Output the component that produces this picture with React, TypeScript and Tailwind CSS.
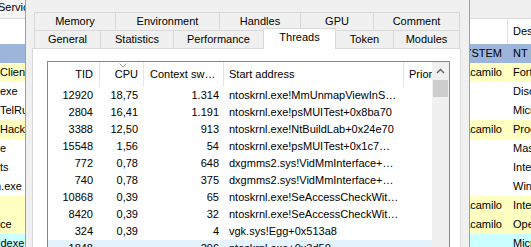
import React from "react";

type Thread = {
  tid: string;
  cpu: string;
  cs: string;
  addr: string;
};

const threads: Thread[] = [
  { tid: "12920", cpu: "18,75", cs: "1.314", addr: "ntoskrnl.exe!MmUnmapViewInS…" },
  { tid: "2804", cpu: "16,41", cs: "1.191", addr: "ntoskrnl.exe!psMUITest+0x8ba70" },
  { tid: "3388", cpu: "12,50", cs: "913", addr: "ntoskrnl.exe!NtBuildLab+0x24e70" },
  { tid: "15548", cpu: "1,56", cs: "54", addr: "ntoskrnl.exe!psMUITest+0x1c7…" },
  { tid: "772", cpu: "0,78", cs: "648", addr: "dxgmms2.sys!VidMmInterface+…" },
  { tid: "740", cpu: "0,78", cs: "375", addr: "dxgmms2.sys!VidMmInterface+…" },
  { tid: "10868", cpu: "0,39", cs: "65", addr: "ntoskrnl.exe!SeAccessCheckWit…" },
  { tid: "8420", cpu: "0,39", cs: "32", addr: "ntoskrnl.exe!SeAccessCheckWit…" },
  { tid: "324", cpu: "0,39", cs: "4", addr: "vgk.sys!Egg+0x513a8" },
  { tid: "1848", cpu: "", cs: "296", addr: "ntoskrnl.exe+0x3d50" },
  { tid: "9112", cpu: "", cs: "12", addr: "ntoskrnl.exe!KeWaitFor…" },
];

// rows of the main window list behind the dialog
const procRows = [
  { bg: "bg-[#9db5da]", left: "", user: "NT AUTHORITY\\SYSTEM", desc: "NT Kernel & System" },
  { bg: "bg-[#ffffc2]", left: "Client", user: "DESKTOP\\camilo", desc: "Fortnite Client" },
  { bg: "bg-white", left: "exe", user: "", desc: "Discord" },
  { bg: "bg-white", left: "TelRu", user: "", desc: "Microsoft Edge" },
  { bg: "bg-[#ffffc2]", left: "Hacker", user: "DESKTOP\\camilo", desc: "Process Hacker" },
  { bg: "bg-white", left: "e", user: "", desc: "Mass Storage" },
  { bg: "bg-white", left: "ts", user: "", desc: "Intel(R) Service" },
  { bg: "bg-white", left: "n.exe", user: "", desc: "Windows Host" },
  { bg: "bg-[#ffffc2]", left: "", user: "DESKTOP\\camilo", desc: "Intel Graphics" },
  { bg: "bg-[#ffffc2]", left: "ce", user: "DESKTOP\\camilo", desc: "Opera Browser" },
  { bg: "bg-[#ccffff]", left: "idexe", user: "", desc: "Microsoft Store" },
];

const topTabs = [
  { label: "Memory", w: "w-[81px]" },
  { label: "Environment", w: "w-[104px]" },
  { label: "Handles", w: "w-[81px]" },
  { label: "GPU", w: "w-[73px]" },
  { label: "Comment", w: "w-[87px] border-r" },
];

function MainListLeft() {
  return (
    <div className="w-[26px] shrink-0 overflow-hidden border-r border-[#a0a0a0]">
      <div className="h-[19px] overflow-hidden whitespace-nowrap border-b border-[#d9d9d9] bg-[#f5f5f5] leading-[14px]">
        <span className="-ml-[2px] inline-block">Services</span>
      </div>
      <div className="h-[25px]" />
      {procRows.map((r, i) => (
        <div
          key={i}
          className={`h-[19px] overflow-hidden whitespace-nowrap leading-[19px] ${r.bg}`}
        >
          <span className={r.left === "n.exe" ? "-ml-[5px] inline-block" : r.left === "idexe" ? "-ml-[2px] inline-block" : ""}>
            {r.left}
          </span>
        </div>
      ))}
    </div>
  );
}

function MainListRight() {
  return (
    <div className="min-w-0 flex-1 overflow-hidden">
      <div className="h-[19px] border-b border-[#d9d9d9] bg-[#f0f0f0]" />
      <div className="flex h-[25px]">
        <div className="w-[38px] shrink-0 border-r border-[#e5e5e5]" />
        <div className="flex items-center whitespace-nowrap pl-[5px]">Description</div>
      </div>
      {procRows.map((r, i) => (
        <div key={i} className={`flex h-[19px] items-center whitespace-nowrap ${r.bg}`}>
          <div className="flex w-[38px] shrink-0 justify-end overflow-hidden pr-[6px]">
            <span className="shrink-0">{r.user}</span>
          </div>
          <div className="pl-[5px]">{r.desc}</div>
        </div>
      ))}
    </div>
  );
}

function ThreadList() {
  return (
    <div className="flex h-[240px] w-[403px] border border-[#828790]">
      <div className="w-[384px] overflow-hidden">
        {/* column header */}
        <div className="grid h-[25px] grid-cols-[52px_44px_80px_180px_1fr] whitespace-nowrap">
          <div className="flex items-center justify-end border-r border-[#e5e5e5] pr-[6px]">TID</div>
          <div className="relative flex items-center justify-end border-r border-[#e5e5e5] pr-[5px]">
            <svg className="absolute left-[19px] top-[1px]" width="8" height="5" viewBox="0 0 8 5">
              <polyline points="0.5,0.5 4,4 7.5,0.5" fill="none" stroke="#a5a5a5" strokeWidth="1" />
            </svg>
            CPU
          </div>
          <div className="flex items-center overflow-hidden border-r border-[#e5e5e5] pl-[6px]">Context sw…</div>
          <div className="flex items-center border-r border-[#e5e5e5] pl-[5px]">Start address</div>
          <div className="flex items-center overflow-hidden pl-[5px]">Priority</div>
        </div>
        {threads.map((t, i) => (
          <div
            key={t.tid}
            className={`grid h-[17px] grid-cols-[52px_44px_80px_180px_1fr] items-center whitespace-nowrap ${
              i === 9 ? "bg-[#e5f3ff]" : ""
            }`}
          >
            <div className="pr-[7px] text-right">{t.tid}</div>
            <div className="pr-[6px] text-right">{t.cpu}</div>
            <div className="pr-[5px] text-right">{t.cs}</div>
            <div className="overflow-hidden pl-[5px]">{t.addr}</div>
            <div />
          </div>
        ))}
      </div>
      {/* vertical scrollbar */}
      <div className="w-[17px] shrink-0 bg-[#f0f0f0]">
        <div className="flex h-[17px] items-center justify-center pt-[2px]">
          <svg width="9" height="6" viewBox="0 0 9 6">
            <polyline points="1,5 4.5,1.5 8,5" fill="none" stroke="#606060" strokeWidth="1.4" />
          </svg>
        </div>
        <div className="mx-px mt-px h-[17px] bg-[#cdcdcd]" />
      </div>
    </div>
  );
}

function ThreadsDialog() {
  return (
    <div className="flex h-[247px] w-[444px] shrink-0 flex-col overflow-hidden border-r border-[#a0a0a0] bg-[#f0f0f0] pl-[6px] pr-[8px] pt-[12px]">
      <div className="ml-[2px] flex h-[18px]">
        {topTabs.map((t) => (
          <div
            key={t.label}
            className={`flex h-full items-center justify-center border-l border-t border-[#d9d9d9] ${t.w}`}
          >
            {t.label}
          </div>
        ))}
      </div>
      <div className="ml-[2px] flex h-[18px] items-end">
        <div className="flex h-full w-[66px] items-center justify-center border-l border-t border-[#d9d9d9]">General</div>
        <div className="flex h-full w-[73px] items-center justify-center border-l border-t border-[#d9d9d9]">Statistics</div>
        <div className="flex h-full w-[90px] items-center justify-center border-l border-t border-[#d9d9d9]">Performance</div>
        <div className="relative z-10 -mb-px flex h-[21px] w-[73px] items-center justify-center border-x border-t border-[#d9d9d9] bg-white pb-[3px]">
          Threads
        </div>
        <div className="flex h-full w-[57px] items-center justify-center border-t border-[#d9d9d9]">Token</div>
        <div className="flex h-full w-[67px] items-center justify-center border-x border-t border-[#d9d9d9]">Modules</div>
      </div>
      <div className="h-[230px] w-[429px] shrink-0 border border-[#d9d9d9] bg-white pl-[14px] pr-[10px] pt-[12px]">
        <ThreadList />
      </div>
    </div>
  );
}

export default function App() {
  return (
    <div className="flex h-[247px] w-[531px] overflow-hidden bg-white font-['Liberation_Sans',Arial,sans-serif] text-[11px] text-black">
      <MainListLeft />
      <ThreadsDialog />
      <MainListRight />
    </div>
  );
}
